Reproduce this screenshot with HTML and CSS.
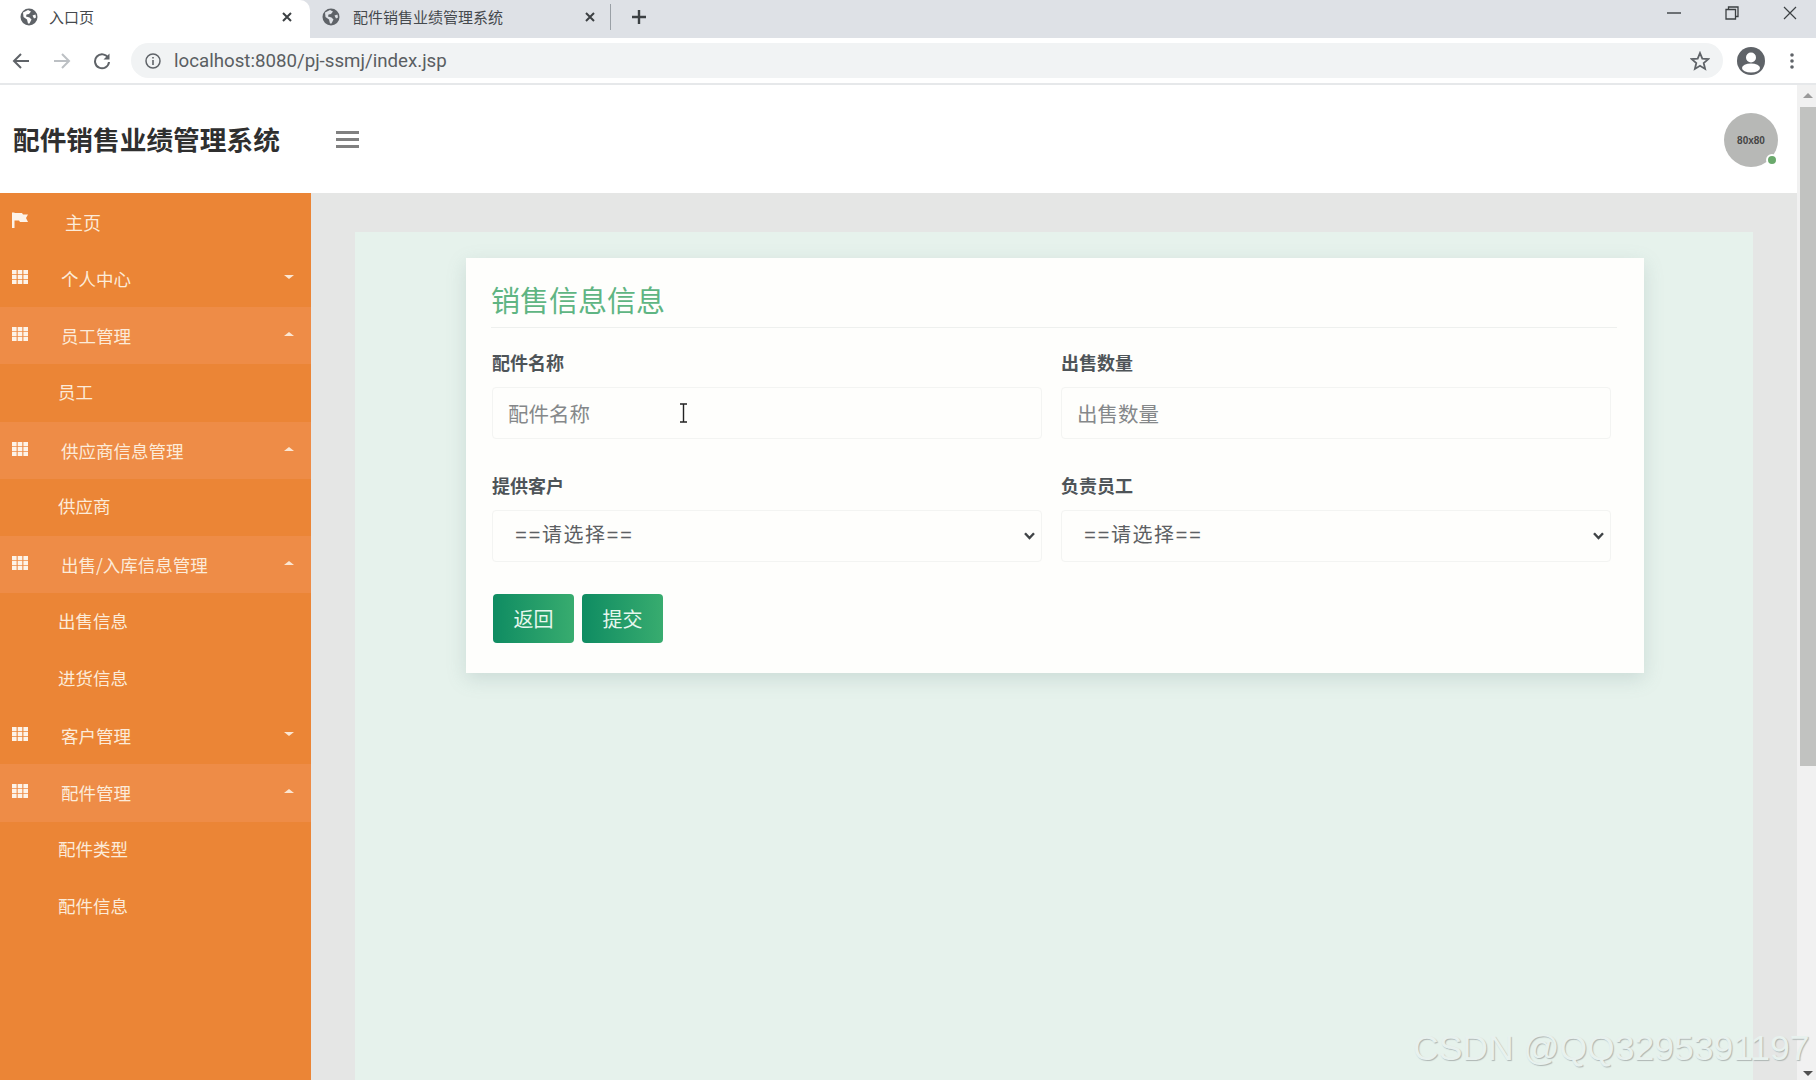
FILE: index.html
```html
<!DOCTYPE html>
<html lang="zh-CN">
<head>
    <meta charset="UTF-8">
    <meta name="viewport" content="width=device-width, initial-scale=1.0">
    <title>配件销售业绩管理系统</title>
    <link rel="stylesheet" href="styles.css">
</head>
<body>
    <svg class="icon-defs">
        <symbol id="grid" viewBox="0 0 16 14"><path d="M0 0h4.6v4.2H0zM5.7 0h4.6v4.2H5.7zM11.4 0h4.6v4.2h-4.6zM0 4.9h4.6v4.2H0zM5.7 4.9h4.6v4.2H5.7zM11.4 4.9h4.6v4.2h-4.6zM0 9.8h4.6V14H0zM5.7 9.8h4.6V14H5.7zM11.4 9.8h4.6V14h-4.6z" fill="#fdf3e8"/></symbol>
        <symbol id="chevron" viewBox="0 0 11 8"><path d="M1 1.2 L5.5 6 L10 1.2" fill="none" stroke="#3f4346" stroke-width="2.4"/></symbol>
    </svg>

    <div class="tabbar">
        <div class="tab tab-active">
            <svg class="globe" viewBox="0 0 18 18"><circle cx="9" cy="9" r="8.5" fill="#5f6368"/><path d="M3 4.5 L8 2 L11 3.5 L9 6 L6.5 6.5 L6 8.5 L9.5 9.5 L11.5 11.5 L9.5 15.5 L8 15.5 L7 11.5 L3.5 9 Z M12.5 7.5 L15.5 6.5 L16 9.5 L14 10.5 Z" fill="#fff"/></svg>
            <span class="tab-title">入口页</span>
            <svg class="tab-close" viewBox="0 0 12 12"><path d="M2 2 L10 10 M10 2 L2 10" stroke="#3c4043" stroke-width="2"/></svg>
        </div>
        <div class="tab">
            <svg class="globe" viewBox="0 0 18 18"><circle cx="9" cy="9" r="8.5" fill="#5f6368"/><path d="M3 4.5 L8 2 L11 3.5 L9 6 L6.5 6.5 L6 8.5 L9.5 9.5 L11.5 11.5 L9.5 15.5 L8 15.5 L7 11.5 L3.5 9 Z M12.5 7.5 L15.5 6.5 L16 9.5 L14 10.5 Z" fill="#dee1e6"/></svg>
            <span class="tab-title">配件销售业绩管理系统</span>
            <svg class="tab-close" viewBox="0 0 12 12"><path d="M2 2 L10 10 M10 2 L2 10" stroke="#3c4043" stroke-width="2"/></svg>
        </div>
        <div class="tab-sep"></div>
        <svg class="tab-new" viewBox="0 0 16 16"><path d="M8 1 V15 M1 8 H15" stroke="#3c4043" stroke-width="2.4"/></svg>
        <div class="win-controls">
            <svg viewBox="0 0 14 14"><path d="M0 7 H14" stroke="#3c4043" stroke-width="1.4"/></svg>
            <svg viewBox="0 0 14 14"><path d="M3.5 3.5 V1 H13 V10.5 H10.5 M1 3.5 H10.5 V13 H1 Z" fill="none" stroke="#3c4043" stroke-width="1.3"/></svg>
            <svg viewBox="0 0 14 14"><path d="M1 1 L13 13 M13 1 L1 13" stroke="#3c4043" stroke-width="1.2"/></svg>
        </div>
    </div>

    <div class="toolbar">
        <svg class="tool-icon" viewBox="0 0 18 18"><path d="M17 9 H2 M9 2 L2 9 L9 16" fill="none" stroke="#5f6368" stroke-width="2"/></svg>
        <svg class="tool-icon" viewBox="0 0 18 18"><path d="M1 9 H16 M9 2 L16 9 L9 16" fill="none" stroke="#bcc0c4" stroke-width="2"/></svg>
        <svg class="tool-icon" viewBox="0 0 18 18"><path d="M15.2 6 A7 7 0 1 0 16 10" fill="none" stroke="#5f6368" stroke-width="2"/><path d="M16.5 1.5 V7.5 H10.5 Z" fill="#5f6368"/></svg>
        <div class="address">
            <svg class="info-icon" viewBox="0 0 16 16"><circle cx="8" cy="8" r="7" fill="none" stroke="#5f6368" stroke-width="1.5"/><path d="M8 7 V12 M8 4 V5.6" stroke="#5f6368" stroke-width="1.6"/></svg>
            <span class="url">localhost:8080/pj-ssmj/index.jsp</span>
            <svg class="star-icon" viewBox="0 0 20 20"><path d="M10 2 L12.3 7.6 L18.3 8.1 L13.7 12 L15.1 17.9 L10 14.8 L4.9 17.9 L6.3 12 L1.7 8.1 L7.7 7.6 Z" fill="none" stroke="#5f6368" stroke-width="1.8"/></svg>
        </div>
        <svg class="profile-icon" viewBox="0 0 28 28"><circle cx="14" cy="14" r="14" fill="#5f6368"/><circle cx="14" cy="10.5" r="5" fill="#fff"/><ellipse cx="14" cy="21" rx="9" ry="4.5" fill="#fff"/></svg>
        <svg class="menu-icon" viewBox="0 0 4 16"><circle cx="2" cy="2" r="1.8" fill="#5f6368"/><circle cx="2" cy="8" r="1.8" fill="#5f6368"/><circle cx="2" cy="14" r="1.8" fill="#5f6368"/></svg>
    </div>

    <div class="page">
        <div class="page-main">
            <header class="header">
                <div class="brand">配件销售业绩管理系统</div>
                <div class="hamburger"><span></span><span></span><span></span></div>
                <div class="avatar">80x80<i class="avatar-dot"></i></div>
            </header>

            <div class="body-row">
                <aside class="sidebar">
                    <a class="nav-item home">
                        <svg class="nav-icon" viewBox="0 0 16 16"><path d="M0 0.5 H2.5 V16 H0 Z M2.5 1 H10 L11 2.5 H16 L14 6 L16 10 H8 L7 8.5 H2.5 Z" fill="#fdf3e8"/></svg>
                        <span>主页</span>
                    </a>
                    <a class="nav-item">
                        <svg class="nav-icon"><use href="#grid"/></svg>
                        <span>个人中心</span><i class="caret"></i>
                    </a>
                    <a class="nav-item open">
                        <svg class="nav-icon"><use href="#grid"/></svg>
                        <span>员工管理</span><i class="caret caret-up"></i>
                    </a>
                    <a class="nav-item sub">员工</a>
                    <a class="nav-item open">
                        <svg class="nav-icon"><use href="#grid"/></svg>
                        <span>供应商信息管理</span><i class="caret caret-up"></i>
                    </a>
                    <a class="nav-item sub">供应商</a>
                    <a class="nav-item open">
                        <svg class="nav-icon"><use href="#grid"/></svg>
                        <span>出售/入库信息管理</span><i class="caret caret-up"></i>
                    </a>
                    <a class="nav-item sub">出售信息</a>
                    <a class="nav-item sub">进货信息</a>
                    <a class="nav-item">
                        <svg class="nav-icon"><use href="#grid"/></svg>
                        <span>客户管理</span><i class="caret"></i>
                    </a>
                    <a class="nav-item open">
                        <svg class="nav-icon"><use href="#grid"/></svg>
                        <span>配件管理</span><i class="caret caret-up"></i>
                    </a>
                    <a class="nav-item sub">配件类型</a>
                    <a class="nav-item sub">配件信息</a>
                </aside>

                <main class="content">
                    <div class="panel">
                        <div class="card">
                            <h2 class="card-title">销售信息信息</h2>
                            <form class="form-grid">
                                <div class="field">
                                    <label>配件名称</label>
                                    <input type="text" placeholder="配件名称">
                                    <svg class="ibeam" viewBox="0 0 9 20"><path d="M1 1 H8 M1 19 H8 M4.5 1 V19" fill="none" stroke="#222" stroke-width="1.4"/></svg>
                                </div>
                                <div class="field">
                                    <label>出售数量</label>
                                    <input type="text" placeholder="出售数量">
                                </div>
                                <div class="field">
                                    <label>提供客户</label>
                                    <select><option>==请选择==</option></select>
                                    <svg class="chevron"><use href="#chevron"/></svg>
                                </div>
                                <div class="field">
                                    <label>负责员工</label>
                                    <select><option>==请选择==</option></select>
                                    <svg class="chevron"><use href="#chevron"/></svg>
                                </div>
                            </form>
                            <div class="actions">
                                <button type="button" class="btn">返回</button>
                                <button type="button" class="btn">提交</button>
                            </div>
                        </div>
                    </div>
                </main>
            </div>
        </div>

        <div class="scrollbar">
            <i class="arrow arrow-up"></i>
            <div class="thumb"></div>
            <i class="arrow arrow-down"></i>
        </div>
    </div>

    <div class="watermark">CSDN @QQ3295391197</div>
</body>
</html>
```

FILE: styles.css
```css
* {
    box-sizing: border-box;
}

html, body {
    height: 100%;
}

body {
    margin: 0;
    height: 1080px;
    overflow: hidden;
    display: flex;
    flex-direction: column;
    font-family: "Noto Sans CJK SC", "Noto Sans", sans-serif;
    background-color: #fff;
    position: relative;
}

.icon-defs {
    display: none;
}

/* browser chrome */
.tabbar {
    height: 38px;
    flex: none;
    display: flex;
    align-items: center;
    background-color: #dee1e6;
}

.tab {
    width: 300px;
    height: 38px;
    display: flex;
    align-items: center;
    padding-left: 12px;
    padding-right: 14px;
    padding-bottom: 5px;
    color: #45494d;
    font-size: 15px;
}

.tab-active {
    width: 310px;
    padding-left: 20px;
    padding-right: 17px;
    background-color: #fff;
    border-radius: 0 10px 0 0;
}

.globe {
    width: 18px;
    height: 18px;
    flex: none;
}

.tab-title {
    margin-left: 13px;
    white-space: nowrap;
}

.tab-active .tab-title {
    margin-left: 11px;
}

.tab-close {
    width: 12px;
    height: 12px;
    margin-left: auto;
    flex: none;
}

.tab-sep {
    width: 1px;
    height: 26px;
    margin-bottom: 4px;
    background-color: #9aa0a6;
}

.tab-new {
    width: 16px;
    height: 16px;
    margin-left: 20px;
    margin-bottom: 5px;
}

.win-controls {
    margin-left: auto;
    display: flex;
    gap: 44px;
    padding-right: 19px;
    margin-top: -12px;
}

.win-controls svg {
    width: 14px;
    height: 14px;
}

.toolbar {
    height: 47px;
    flex: none;
    display: flex;
    align-items: center;
    padding-left: 12px;
    background-color: #fff;
    border-bottom: 2px solid #e6e8ea;
}

.tool-icon {
    width: 18px;
    height: 18px;
    margin-right: 23px;
    flex: none;
}

.tool-icon:nth-child(3) {
    margin-right: 0;
    margin-left: -1px;
}

.address {
    width: 1592px;
    height: 35px;
    margin-left: 20px;
    display: flex;
    align-items: center;
    padding-left: 14px;
    padding-right: 13px;
    background-color: #f1f3f4;
    border-radius: 18px;
}

.info-icon {
    width: 16px;
    height: 16px;
    flex: none;
}

.url {
    margin-left: 13px;
    font-family: "Roboto", sans-serif;
    font-size: 18.7px;
    color: #5a5e62;
}

.star-icon {
    width: 20px;
    height: 20px;
    margin-left: auto;
}

.profile-icon {
    width: 28px;
    height: 28px;
    margin-left: 14px;
    flex: none;
}

.menu-icon {
    width: 4px;
    height: 16px;
    margin-left: 25px;
    flex: none;
}

/* page */
.page {
    flex: 1;
    min-height: 0;
    display: flex;
}

.page-main {
    flex: 1;
    min-width: 0;
    display: flex;
    flex-direction: column;
}

.header {
    height: 108px;
    flex: none;
    display: flex;
    align-items: center;
    padding-left: 13px;
    padding-right: 19px;
    background-color: #fff;
}

.brand {
    font-size: 26.7px;
    font-weight: 700;
    color: #2f2f2f;
    white-space: nowrap;
    line-height: 36px;
}

.hamburger {
    width: 23px;
    margin-left: 56px;
    display: flex;
    flex-direction: column;
    gap: 4px;
}

.hamburger span {
    height: 3px;
    background-color: #808080;
}

.avatar {
    width: 54px;
    height: 54px;
    margin-left: auto;
    margin-top: 2px;
    position: relative;
    display: flex;
    align-items: center;
    justify-content: center;
    border-radius: 50%;
    background-color: #b7b8b6;
    color: #454545;
    font-family: "Liberation Sans", sans-serif;
    font-size: 10px;
    font-weight: 700;
}

.avatar-dot {
    position: absolute;
    right: 0;
    bottom: 1px;
    width: 12px;
    height: 12px;
    border-radius: 50%;
    background-color: #6aa96c;
    border: 2px solid #fff;
}

.body-row {
    flex: 1;
    min-height: 0;
    display: flex;
}

/* sidebar */
.sidebar {
    width: 311px;
    flex: none;
    background-color: #eb8536;
}

.nav-item {
    height: 57.15px;
    display: flex;
    align-items: center;
    padding-left: 12px;
    padding-right: 17px;
    color: #fcebd9;
    font-size: 17.5px;
}

.nav-item span {
    margin-left: 33px;
    white-space: nowrap;
}

.nav-item.home span {
    margin-left: 37px;
    font-size: 18px;
}

.nav-item.open {
    background-color: #ee8c47;
}

.nav-item.sub {
    padding-left: 58px;
    padding-bottom: 3px;
}

.nav-icon {
    width: 16px;
    height: 16px;
    flex: none;
    margin-top: -3px;
}

.caret {
    margin-left: auto;
    margin-top: -3px;
    width: 0;
    height: 0;
    border-left: 5px solid transparent;
    border-right: 5px solid transparent;
    border-top: 4px solid #fbe6d2;
}

.caret-up {
    border-top: 0;
    border-bottom: 4px solid #fbe6d2;
}

/* content */
.content {
    flex: 1;
    min-width: 0;
    padding: 39px 44px 0 44px;
    background-color: #e5e6e5;
}

.panel {
    height: 100%;
    padding-top: 26px;
    padding-left: 111px;
    background-color: #e6f2ec;
}

.card {
    width: 1178px;
    height: 415px;
    padding: 25px 27px 0 25px;
    background-color: #fefefc;
    box-shadow: 0 6px 18px rgba(110, 140, 140, 0.22);
}

.card-title {
    margin: 0;
    padding-bottom: 12px;
    font-size: 29px;
    font-weight: 400;
    line-height: 32px;
    color: #5fb583;
    border-bottom: 1px solid #eef0ee;
}

.form-grid {
    margin-top: 24px;
    margin-left: 1px;
    margin-right: 7px;
    display: grid;
    grid-template-columns: 550px 550px;
    column-gap: 19px;
    row-gap: 36px;
}

.field {
    position: relative;
    display: flex;
    flex-direction: column;
}

.field label {
    height: 24px;
    margin-bottom: 11px;
    font-size: 18px;
    font-weight: 700;
    line-height: 21px;
    color: #4e5458;
}

.field input,
.field select {
    width: 100%;
    height: 52px;
    border: 1px solid #f3f4f2;
    border-radius: 4px;
    background-color: #fefefc;
    font-family: "Noto Sans CJK SC", sans-serif;
    font-size: 20.5px;
    color: #5c6063;
    outline: none;
}

.field input {
    padding: 0 15px;
}

.field input::placeholder {
    color: #85888a;
}

.field select {
    padding-left: 22px;
    font-family: "Liberation Mono", "Noto Sans CJK SC", monospace;
    font-size: 20px;
    letter-spacing: 1.5px;
    appearance: none;
}

.chevron {
    position: absolute;
    right: 7px;
    bottom: 22px;
    width: 11px;
    height: 8px;
    pointer-events: none;
}

.ibeam {
    position: absolute;
    left: 187px;
    top: 51px;
    width: 9px;
    height: 20px;
}

.actions {
    margin-top: 32px;
    margin-left: 2px;
    display: flex;
    gap: 8px;
}

.btn {
    width: 81px;
    height: 49px;
    border: 0;
    border-radius: 4px;
    background-image: linear-gradient(90deg, #0f8c62, #38ac6f);
    color: #e6f7ee;
    font-family: "Noto Sans CJK SC", sans-serif;
    font-size: 20px;
}

/* scrollbar */
.scrollbar {
    width: 19px;
    flex: none;
    display: flex;
    flex-direction: column;
    align-items: flex-end;
    background-color: #f1f1f1;
}

.arrow {
    width: 16px;
    display: flex;
    justify-content: center;
}

.arrow-up {
    height: 22px;
    padding-top: 8px;
}

.arrow-up::before,
.arrow-down::before {
    content: "";
    width: 0;
    height: 0;
    border-left: 5px solid transparent;
    border-right: 5px solid transparent;
}

.arrow-up::before {
    border-bottom: 5px solid #9a9a9a;
}

.thumb {
    width: 16px;
    height: 659px;
    background-color: #c1c2c0;
}

.arrow-down {
    margin-top: auto;
    height: 15px;
    padding-top: 6px;
}

.arrow-down::before {
    border-top: 5px solid #505050;
}

/* video watermark */
.watermark {
    position: absolute;
    left: 1413px;
    top: 1027px;
    font-family: "Liberation Sans", sans-serif;
    font-size: 35.5px;
    line-height: 42px;
    white-space: nowrap;
    color: #e8f1ee;
    text-shadow: 1px 1px 1px #aeb6b4;
}
```
